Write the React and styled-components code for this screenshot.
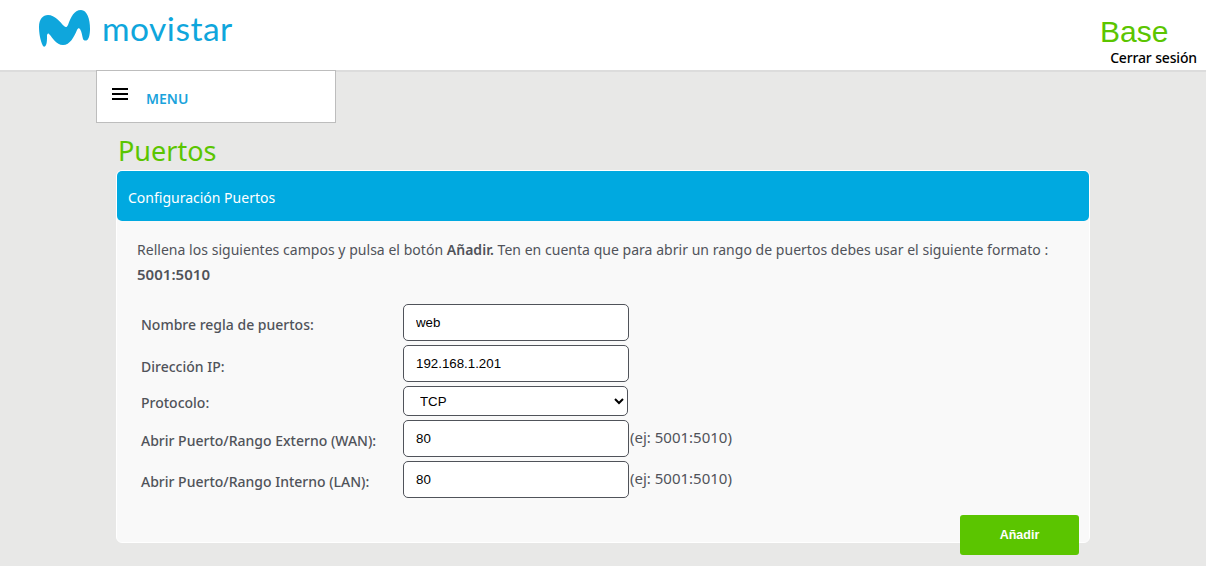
import React from 'react'
import styled, { createGlobalStyle } from 'styled-components'

const Global = createGlobalStyle`
    html, body {
        margin: 0;
        height: 100%;
        overflow: hidden;
        background: #e8e8e7;
        font-family: "Noto Sans", "Open Sans", sans-serif;
    }
`

const Header = styled.header`
    display: flex;
    justify-content: space-between;
    height: 70px;
    background: #fff;
    box-shadow: 0 2px 0 #dcdcdc;
`

const Brand = styled.div`
    display: flex;
    align-items: flex-start;
    gap: 11px;
    padding: 10px 0 0 39px;
`

const BrandName = styled.span`
    color: #0fa6dc;
    font-family: "Lato", sans-serif;
    font-size: 33.5px;
    letter-spacing: 0.5px;
    line-height: 38px;
    margin-top: -1px;
`

const Account = styled.div`
    display: flex;
    flex-direction: column;
    align-items: flex-end;
    padding: 14px 9px 0 0;
`

const Plan = styled.div`
    width: 97px;
    color: #5bc500;
    font-family: "Liberation Sans", sans-serif;
    font-size: 30px;
    line-height: 35px;
`

const Logout = styled.a`
    color: #000;
    font-size: 14px;
    font-weight: 500;
    letter-spacing: -0.15px;
    line-height: 18px;
`

const Menu = styled.nav`
    box-sizing: border-box;
    display: flex;
    width: 240px;
    height: 53px;
    margin-left: 96px;
    padding: 17px 0 0 15px;
    gap: 18px;
    position: relative;
    background: #fff;
    border: 1px solid #bdbdbd;
`

const MenuLabel = styled.span`
    color: #1aa3dc;
    font-size: 14px;
    font-weight: 600;
    line-height: 22px;
`

const Main = styled.main`
    width: 974px;
    margin-left: 116px;
`

const Title = styled.h1`
    margin: 9px 0 0 2px;
    color: #5bc500;
    font-size: 27px;
    font-weight: 400;
    line-height: 38px;
`

const Panel = styled.section`
    box-sizing: border-box;
    height: 373px;
    background: #f9f9f9;
    border: 1px solid #fff;
    border-radius: 6px;
`

const PanelHead = styled.h2`
    margin: 0;
    height: 50px;
    padding: 4px 0 0 11px;
    box-sizing: border-box;
    color: #fff;
    background: #00a9e0;
    border-radius: 5px;
    font-size: 14px;
    font-weight: 400;
    line-height: 46px;
`

const Intro = styled.p`
    margin: 0;
    padding: 16px 20px 0;
    color: #50535a;
    font-size: 14px;
    letter-spacing: 0.03px;
    line-height: 25px;

    b {
        font-weight: 600;
    }
`

const Code = styled.b`
    font-size: 15px;
`

const Fields = styled.div`
    display: grid;
    grid-template-columns: 262px 226px auto;
    justify-content: start;
    align-items: center;
    row-gap: 4px;
    padding: 17px 0 0 24px;
`

const Label = styled.label`
    color: #50535a;
    font-size: 14px;
    font-weight: 500;
    margin-top: ${props => props.$offset}px;
`

const Input = styled.input`
    box-sizing: border-box;
    width: 226px;
    height: 37px;
    padding: 0 12px;
    background: #fff;
    border: 1px solid #50535a;
    border-radius: 5px;
    color: #000;
    font-family: "Liberation Sans", sans-serif;
    font-size: 13.3px;
`

const Select = styled.select`
    box-sizing: border-box;
    width: 225px;
    height: 30px;
    padding: 0 12px;
    background: #fff;
    border: 1px solid #50535a;
    border-radius: 5px;
    color: #000;
    font-family: "Liberation Sans", sans-serif;
    font-size: 13.3px;
`

const Hint = styled.span`
    padding-left: 1px;
    color: #50535a;
    font-size: 15px;
    margin-top: -3px;
`

const Actions = styled.div`
    display: flex;
    justify-content: flex-end;
    padding: 17px 10px 0 0;
`

const Button = styled.button`
    width: 119px;
    height: 40px;
    background: #5bc500;
    border: 0;
    border-radius: 3px;
    color: #fff;
    font-family: "Liberation Sans", sans-serif;
    font-size: 12.5px;
    font-weight: 700;
`

const Logo = () => (
    <svg width="52" height="38" viewBox="0 0 52 38">
        <path
            d="M4 36C1 30 0 22 0 17C0 9 4 5 9 5C16 5 21 12 25 16C27 18 28 17 29 15C32 7 35 0 42 0C48 0 51 9 51 19C51 24 50 28 49 29C48 31 45 31 44 29C43 26 43 22 41 19C40 18 39 18 38 20C35 27 31 35 24 35C17 35 14 28 10 24C9 23 8 24 8 26C8 29 8 33 7 35C6 37 5 37 4 36Z"
            fill="#0fa6dc"
        />
    </svg>
)

const Burger = () => (
    <svg width="16" height="12" viewBox="0 0 16 12">
        <path d="M0 1h16M0 6h16M0 11h16" stroke="#000" strokeWidth="2" />
    </svg>
)

const App = () => (
    <>
        <Global />
        <Header>
            <Brand>
                <Logo />
                <BrandName>movistar</BrandName>
            </Brand>
            <Account>
                <Plan>Base</Plan>
                <Logout>Cerrar sesión</Logout>
            </Account>
        </Header>
        <Menu>
            <Burger />
            <MenuLabel>MENU</MenuLabel>
        </Menu>
        <Main>
            <Title>Puertos</Title>
            <Panel>
                <PanelHead>Configuración Puertos</PanelHead>
                <Intro>
                    Rellena los siguientes campos y pulsa el botón <b>Añadir.</b> Ten en cuenta que para abrir un rango de puertos debes usar el siguiente formato :
                    <br />
                    <Code>5001:5010</Code>
                </Intro>
                <Fields>
                    <Label $offset={3}>Nombre regla de puertos:</Label>
                    <Input defaultValue="web" />
                    <span />
                    <Label $offset={5}>Dirección IP:</Label>
                    <Input defaultValue="192.168.1.201" />
                    <span />
                    <Label $offset={3}>Protocolo:</Label>
                    <Select defaultValue="TCP">
                        <option>TCP</option>
                        <option>UDP</option>
                    </Select>
                    <span />
                    <Label $offset={3}>Abrir Puerto/Rango Externo (WAN):</Label>
                    <Input defaultValue="80" />
                    <Hint>(ej: 5001:5010)</Hint>
                    <Label $offset={3}>Abrir Puerto/Rango Interno (LAN):</Label>
                    <Input defaultValue="80" />
                    <Hint>(ej: 5001:5010)</Hint>
                </Fields>
                <Actions>
                    <Button>Añadir</Button>
                </Actions>
            </Panel>
        </Main>
    </>
)

export default App
